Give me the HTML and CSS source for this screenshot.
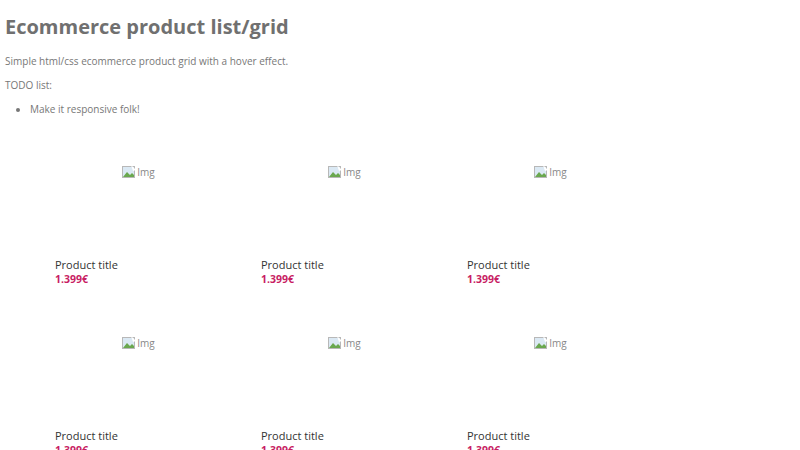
FILE: index.html
```html
<!DOCTYPE html>
<html lang="en">
<head>
  <meta charset="UTF-8">
  <meta name="viewport" content="width=device-width, initial-scale=1.0">
  <title>Ecommerce product list/grid</title>
  <link rel="stylesheet" href="styles.css">
</head>
<body>
  <h1>Ecommerce product list/grid</h1>
  <p>Simple html/css ecommerce product grid with a hover effect.</p>
  <p>TODO list:</p>
  <ul>
    <li>Make it responsive folk!</li>
  </ul>

  <div class="products">
    <div class="product">
      <div class="product-img"><span class="broken"><svg viewBox="0 0 16 16" width="16" height="16"><rect x="1.5" y="2.5" width="12" height="11" fill="#dbe9f4" stroke="#b8b8b8"/><path d="M2 13 L6 8 L9 11 L11 9 L13 11 L13 13 Z" fill="#6aa84f"/><path d="M10 1 L15 6 L12 7 Z" fill="#fff"/></svg>Img</span></div>
      <div class="product-title">Product title</div>
      <div class="product-price">1.399€</div>
    </div>
    <div class="product">
      <div class="product-img"><span class="broken"><svg viewBox="0 0 16 16" width="16" height="16"><rect x="1.5" y="2.5" width="12" height="11" fill="#dbe9f4" stroke="#b8b8b8"/><path d="M2 13 L6 8 L9 11 L11 9 L13 11 L13 13 Z" fill="#6aa84f"/><path d="M10 1 L15 6 L12 7 Z" fill="#fff"/></svg>Img</span></div>
      <div class="product-title">Product title</div>
      <div class="product-price">1.399€</div>
    </div>
    <div class="product">
      <div class="product-img"><span class="broken"><svg viewBox="0 0 16 16" width="16" height="16"><rect x="1.5" y="2.5" width="12" height="11" fill="#dbe9f4" stroke="#b8b8b8"/><path d="M2 13 L6 8 L9 11 L11 9 L13 11 L13 13 Z" fill="#6aa84f"/><path d="M10 1 L15 6 L12 7 Z" fill="#fff"/></svg>Img</span></div>
      <div class="product-title">Product title</div>
      <div class="product-price">1.399€</div>
    </div>
    <div class="product">
      <div class="product-img"><span class="broken"><svg viewBox="0 0 16 16" width="16" height="16"><rect x="1.5" y="2.5" width="12" height="11" fill="#dbe9f4" stroke="#b8b8b8"/><path d="M2 13 L6 8 L9 11 L11 9 L13 11 L13 13 Z" fill="#6aa84f"/><path d="M10 1 L15 6 L12 7 Z" fill="#fff"/></svg>Img</span></div>
      <div class="product-title">Product title</div>
      <div class="product-price">1.399€</div>
    </div>
    <div class="product">
      <div class="product-img"><span class="broken"><svg viewBox="0 0 16 16" width="16" height="16"><rect x="1.5" y="2.5" width="12" height="11" fill="#dbe9f4" stroke="#b8b8b8"/><path d="M2 13 L6 8 L9 11 L11 9 L13 11 L13 13 Z" fill="#6aa84f"/><path d="M10 1 L15 6 L12 7 Z" fill="#fff"/></svg>Img</span></div>
      <div class="product-title">Product title</div>
      <div class="product-price">1.399€</div>
    </div>
    <div class="product">
      <div class="product-img"><span class="broken"><svg viewBox="0 0 16 16" width="16" height="16"><rect x="1.5" y="2.5" width="12" height="11" fill="#dbe9f4" stroke="#b8b8b8"/><path d="M2 13 L6 8 L9 11 L11 9 L13 11 L13 13 Z" fill="#6aa84f"/><path d="M10 1 L15 6 L12 7 Z" fill="#fff"/></svg>Img</span></div>
      <div class="product-title">Product title</div>
      <div class="product-price">1.399€</div>
    </div>
  </div>
</body>
</html>
```

FILE: styles.css
```css
body {
  font-family: 'Open Sans', sans-serif;
  font-size: 10px;
  line-height: 16px;
  color: #777;
  margin: 0;
  padding: 5px;
}
h1 {
  font-size: 20px;
  line-height: 32px;
  color: #707070;
  margin: 6px 0 10px;
}
p {
  margin: 0 0 8px;
}
ul {
  margin: 0;
  padding-left: 25px;
}
.products {
  display: flex;
  flex-wrap: wrap;
  width: 620px;
  margin: 47px 0 0 50px;
}
.product {
  width: 206px;
  height: 171px;
}
.product-img {
  width: 166px;
  height: 93px;
  text-align: center;
}
.broken {
  display: inline-flex;
  align-items: center;
  color: #888;
  font-size: 10px;
}
.product-title {
  font-size: 11px;
  line-height: 16px;
  color: #333;
}
.product-price {
  font-size: 10.5px;
  line-height: 13px;
  font-weight: bold;
  color: #c81e63;
}
```
